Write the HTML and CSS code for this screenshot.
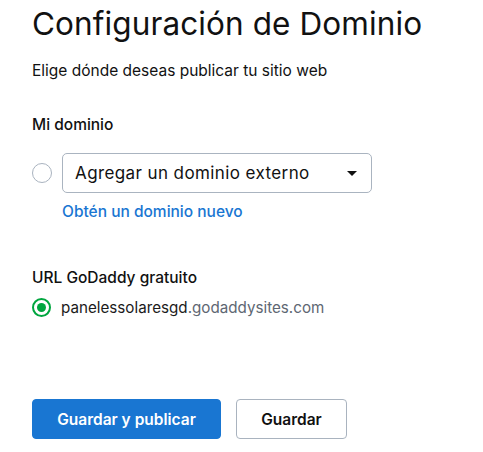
FILE: index.html
```html
<!DOCTYPE html>
<html lang="es">
<head>
    <meta charset="UTF-8">
    <meta name="viewport" content="width=device-width, initial-scale=1.0">
    <title>Configuración de Dominio</title>
    <link rel="stylesheet" href="styles.css">
</head>
<body>
    <div class="page">
        <h1 class="title">Configuración de Dominio</h1>
        <p class="subtitle">Elige dónde deseas publicar tu sitio web</p>

        <!-- Dominio propio -->
        <section class="section mine">
            <h2 class="section-label">Mi dominio</h2>
            <div class="option-row">
                <span class="radio"></span>
                <div class="select">
                    <span>Agregar un dominio externo</span>
                    <span class="caret"></span>
                </div>
            </div>
            <a class="link" href="#">Obtén un dominio nuevo</a>
        </section>

        <!-- URL gratuita -->
        <section class="section free">
            <h2 class="section-label">URL GoDaddy gratuito</h2>
            <div class="option-row small">
                <span class="radio checked"></span>
                <span class="url">panelessolaresgd<span class="muted">.godaddysites.com</span></span>
            </div>
        </section>

        <div class="actions">
            <button class="btn primary">Guardar y publicar</button>
            <button class="btn secondary">Guardar</button>
        </div>
    </div>
</body>
</html>
```

FILE: styles.css
```css
* {
    box-sizing: border-box;
    margin: 0;
    padding: 0;
}

body {
    font-family: Inter, "Noto Sans", sans-serif;
    background-color: #ffffff;
    color: #111111;
}

.page {
    padding: 4px 32px 0 32px;
}

.title {
    font-size: 31.5px;
    font-weight: 400;
    line-height: 40px;
    letter-spacing: 0.1px;
}

.subtitle {
    margin-top: 17px;
    font-size: 15.5px;
    line-height: 20px;
}

.section-label {
    font-size: 15.5px;
    font-weight: 500;
    line-height: 22px;
}

.mine {
    margin-top: 33px;
}

.option-row {
    display: flex;
    align-items: center;
    gap: 10px;
    margin-top: 17px;
}

.option-row.small {
    margin-top: 9px;
}

.radio {
    width: 20px;
    height: 20px;
    border: 1px solid #a9b3bf;
    border-radius: 50%;
    flex-shrink: 0;
    position: relative;
}

.radio.checked {
    width: 19px;
    height: 19px;
    border: 2px solid #00a63f;
}

.radio.checked::after {
    content: "";
    position: absolute;
    top: 3px;
    left: 3px;
    width: 9px;
    height: 9px;
    border-radius: 50%;
    background-color: #00a63f;
}

.select {
    width: 310px;
    height: 40px;
    border: 1px solid #aab4c0;
    border-radius: 5px;
    display: flex;
    align-items: center;
    justify-content: space-between;
    padding: 0 14px 0 12px;
    font-size: 17px;
    letter-spacing: 0.4px;
}

.caret {
    width: 0;
    height: 0;
    border-left: 5px solid transparent;
    border-right: 5px solid transparent;
    border-top: 5px solid #111111;
}

.link {
    display: inline-block;
    margin-top: 9px;
    margin-left: 30px;
    font-size: 15.5px;
    font-weight: 500;
    color: #1976d2;
    text-decoration: none;
}

.free {
    margin-top: 46px;
}

.url {
    font-size: 15.2px;
    color: #1b1b1b;
}

.muted {
    color: #5e6773;
}

.actions {
    display: flex;
    gap: 15px;
    margin-top: 82px;
}

.btn {
    height: 40px;
    border-radius: 4px;
    font-family: Inter, "Noto Sans", sans-serif;
    font-size: 15.5px;
    font-weight: 600;
    cursor: pointer;
}

.primary {
    width: 189px;
    background-color: #1976d2;
    border: 1px solid #1976d2;
    color: #ffffff;
}

.secondary {
    width: 111px;
    background-color: #ffffff;
    border: 1px solid #a9b3bf;
    color: #111111;
}
```
